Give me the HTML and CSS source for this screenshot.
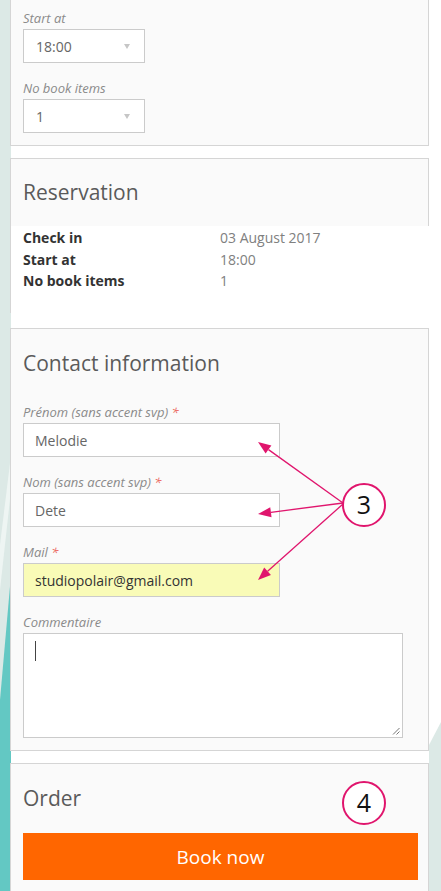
FILE: index.html
```html
<!DOCTYPE html>
<html lang="en">
<head>
<meta charset="utf-8">
<title>Booking</title>
<link rel="stylesheet" href="styles.css">
</head>
<body>
<svg class="bg" width="441" height="891" viewBox="0 0 441 891" aria-hidden="true">
  <rect x="0" y="0" width="11" height="891" fill="#dce9e6"/>
  <polygon points="0,545 11,455 11,490 0,590" fill="#eef5f3"/>
  <polygon points="11,575 11,891 0,891 0,700" fill="#63c8c3"/>
  <polygon points="429,745 441,722 441,891 429,891" fill="#dce9e6"/>
</svg>

<main class="page">
  <section class="card card-top">
    <div class="field">
      <div class="lbl">Start at</div>
      <div class="select"><span>18:00</span><i class="tri"></i></div>
    </div>
    <div class="field">
      <div class="lbl">No book items</div>
      <div class="select"><span>1</span><i class="tri"></i></div>
    </div>
  </section>

  <section class="card-res">
    <div class="res-head"><h2 class="title">Reservation</h2></div>
    <div class="res-table">
      <span class="k">Check in</span><span class="v">03 August 2017</span>
      <span class="k">Start at</span><span class="v">18:00</span>
      <span class="k">No book items</span><span class="v">1</span>
    </div>
  </section>

  <section class="card card-contact">
    <h2 class="title">Contact information</h2>
    <div class="field first">
      <div class="lbl">Prénom (sans accent svp) <span class="req">*</span></div>
      <input class="inp" type="text" value="Melodie" readonly>
    </div>
    <div class="field">
      <div class="lbl">Nom (sans accent svp) <span class="req">*</span></div>
      <input class="inp" type="text" value="Dete" readonly>
    </div>
    <div class="field">
      <div class="lbl">Mail <span class="req">*</span></div>
      <input class="inp inp-filled" type="text" value="studiopolair@gmail.com" readonly>
    </div>
    <div class="field">
      <div class="lbl">Commentaire</div>
      <div class="textarea">
        <span class="cursor"></span>
        <svg class="grip" width="8" height="8" viewBox="0 0 8 8" aria-hidden="true">
          <line x1="7.5" y1="1" x2="1" y2="7.5" stroke="#777" stroke-width="1"/>
          <line x1="7.5" y1="4.5" x2="4.5" y2="7.5" stroke="#777" stroke-width="1"/>
        </svg>
      </div>
    </div>
  </section>

  <section class="card card-order">
    <h2 class="title">Order</h2>
    <button class="book" type="button">Book now</button>
  </section>
</main>

<svg class="annot" width="441" height="891" viewBox="0 0 441 891" aria-hidden="true">
  <g stroke="#e0156d" stroke-width="1.3" fill="none">
    <line x1="343" y1="503" x2="268.5" y2="449.6"/>
    <line x1="343" y1="503" x2="270.9" y2="512.3"/>
    <line x1="343" y1="504" x2="267.6" y2="571.3"/>
  </g>
  <g fill="#e0156d">
    <polygon points="258,442 271.4,445.6 265.6,453.6"/>
    <polygon points="258,514 270.25,507.3 271.55,517.3"/>
    <polygon points="258,580 264.2,567.6 270.95,575"/>
  </g>
  <g stroke="#e0156d" stroke-width="2" fill="#fff">
    <circle cx="364" cy="505" r="21"/>
    <circle cx="364" cy="803" r="21"/>
  </g>
  <text class="num" x="364" y="514" text-anchor="middle">3</text>
  <text class="num" x="364" y="812" text-anchor="middle">4</text>
</svg>
</body>
</html>
```
FILE: styles.css
```css
* {
  box-sizing: border-box;
  margin: 0;
  padding: 0;
}

html, body {
  width: 441px;
  height: 891px;
  overflow: hidden;
}

body {
  position: relative;
  background: #fff;
  font-family: "Open Sans", "Noto Sans", sans-serif;
  color: #555;
}

.bg {
  position: absolute;
  left: 0;
  top: 0;
  z-index: -1;
}

.annot {
  position: absolute;
  left: 0;
  top: 0;
  pointer-events: none;
}

.num {
  font-family: "Open Sans", sans-serif;
  font-size: 25px;
  fill: #111;
}

.page {
  padding-left: 10px;
  width: 429px;
}

.card {
  width: 419px;
  background: #fafafa;
  border: 1px solid #d5d5d5;
  padding: 0 12px;
}

.title {
  font-size: 21px;
  font-weight: 400;
  line-height: 28px;
  color: #5a5a5a;
}

/* fields */
.field + .field {
  margin-top: 17px;
}

.field.first {
  margin-top: 27px;
}

.lbl {
  font-size: 13px;
  font-style: italic;
  line-height: 16px;
  color: #8a8a8a;
  margin-bottom: 3px;
  white-space: nowrap;
}

.req {
  color: #ec6a62;
}

.select {
  width: 122px;
  height: 34px;
  background: #fff;
  border: 1px solid #cbcbcb;
  display: flex;
  align-items: center;
  justify-content: space-between;
  padding: 0 14px 0 12px;
  font-size: 14px;
  color: #666;
}

.tri {
  width: 0;
  height: 0;
  border-left: 3px solid transparent;
  border-right: 3px solid transparent;
  border-top: 5px solid #c6c6c6;
}

.inp {
  display: block;
  width: 257px;
  height: 34px;
  background: #fff;
  border: 1px solid #cbcbcb;
  padding: 0 11px;
  font-family: "Open Sans", sans-serif;
  font-size: 14px;
  color: #666;
  outline: none;
}

.inp-filled {
  background: #f9fbb7;
  color: #333;
}

.textarea {
  position: relative;
  width: 380px;
  height: 105px;
  background: #fff;
  border: 1px solid #cbcbcb;
  padding: 7px 11px;
}

.cursor {
  display: block;
  width: 1px;
  height: 20px;
  background: #444;
}

.grip {
  position: absolute;
  right: 2px;
  bottom: 2px;
}

/* card 1 */
.card-top {
  border-top: none;
  padding-top: 10px;
  padding-bottom: 12px;
  margin-bottom: 12px;
}

/* reservation */
.card-res {
  width: 419px;
  border-left: 1px solid #d5d5d5;
  margin-bottom: 15px;
  background: #fff;
}

.res-head {
  background: #fafafa;
  border-top: 1px solid #d5d5d5;
  border-right: 1px solid #d5d5d5;
  padding: 19px 0 20px 12px;
}

.res-table {
  display: grid;
  grid-template-columns: 197px 1fr;
  padding: 1px 0 21.5px 12px;
  font-size: 14px;
  line-height: 21.5px;
}

.res-table .k {
  font-weight: 700;
  color: #333;
}

.res-table .v {
  color: #808080;
}

/* contact */
.card-contact {
  padding-top: 20px;
  padding-bottom: 12px;
  margin-bottom: 12px;
}

/* order */
.card-order {
  padding-top: 20px;
  padding-bottom: 20px;
  border-bottom: none;
}

.book {
  display: block;
  margin-top: 21px;
  width: 395px;
  height: 47px;
  border: none;
  background: #ff6600;
  color: #fff;
  font-family: "Open Sans", sans-serif;
  font-size: 19px;
  text-align: center;
}
```
